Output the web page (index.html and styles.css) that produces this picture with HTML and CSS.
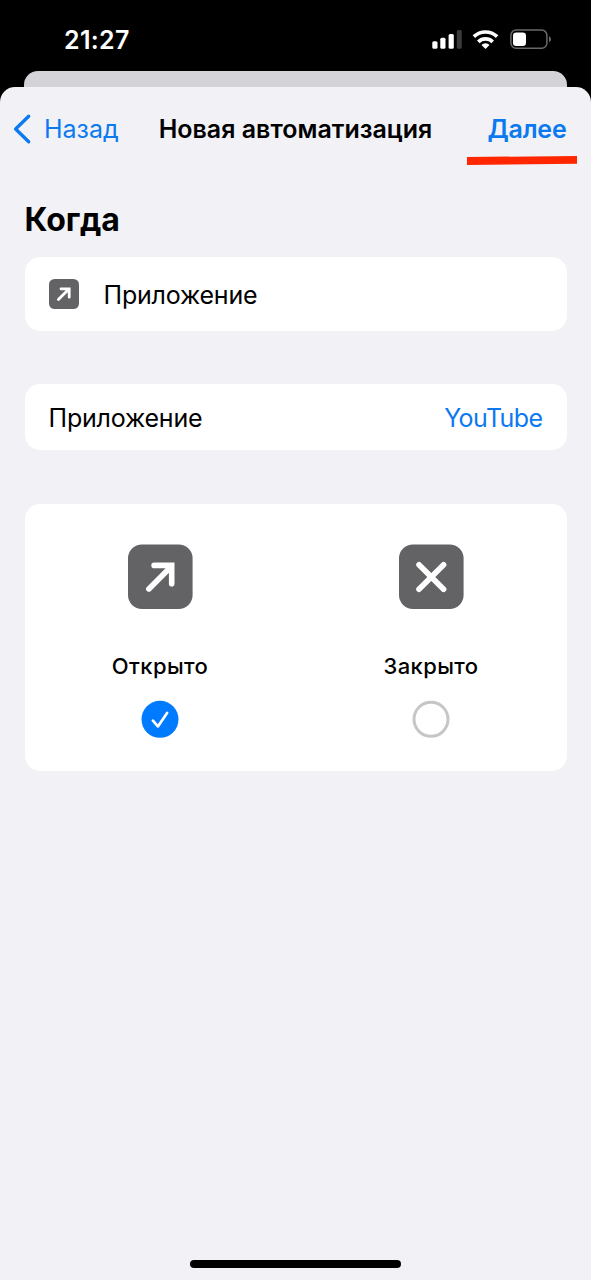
FILE: index.html
```html
<!DOCTYPE html>
<html lang="ru">
<head>
<meta charset="utf-8">
<title>Новая автоматизация</title>
<link rel="stylesheet" href="styles.css">
</head>
<body>
<div class="phone">
  <header class="status">
    <span class="time">21:27</span>
    <svg class="status-icons" width="122" height="24" viewBox="0 0 122 24">
      <g fill="#fff">
        <rect x="2.3" y="13.2" width="5.2" height="7.6" rx="1.5"/>
        <rect x="10.3" y="9.8" width="5.2" height="11" rx="1.5"/>
        <rect x="18.6" y="6" width="5.2" height="14.8" rx="1.5"/>
        <rect x="26.8" y="2" width="5" height="18.8" rx="1.5" fill="#3a3a3c"/>
      </g>
      <g fill="none" stroke="#fff" stroke-width="3.7">
        <path d="M43.9 8.7a16.7 16.7 0 0 1 23.2 0"/>
        <path d="M48.3 13.8a10.4 10.4 0 0 1 14.4 0"/>
      </g>
      <path d="M51.5 16.9a5.6 5.6 0 0 1 8 0L55.5 20.9z" fill="#fff"/>
      <rect x="80.9" y="2.1" width="36" height="18.2" rx="5.2" fill="none" stroke="#69696b" stroke-width="1.5"/>
      <rect x="83" y="4.6" width="13" height="13.4" rx="3.2" fill="#fff"/>
      <path d="M119 8.2c2.6 1.1 2.6 5 0 6z" fill="#69696b"/>
    </svg>
  </header>
  <div class="back-sheet"></div>
  <main class="sheet">
    <nav class="nav">
      <a class="back">
        <svg width="20" height="32" viewBox="0 0 20 32"><path d="M16.7 3.2L3.6 16L16.7 28.8" fill="none" stroke="#0b79f0" stroke-width="3.3" stroke-linecap="round" stroke-linejoin="round"/></svg>
        <span class="back-label">Назад</span>
      </a>
      <h1 class="title">Новая автоматизация</h1>
      <a class="next">Далее
        <svg class="marker" width="112" height="12" viewBox="0 0 112 12"><path d="M1 2L111 1V8.8L1 9.9z" fill="#ff2600"/></svg>
      </a>
    </nav>
    <h2 class="heading">Когда</h2>
    <section class="card trigger">
      <svg width="30" height="30" viewBox="0 0 30 30"><rect width="30" height="30" rx="5.5" fill="#636365"/><path d="M9.4 20.5L20 9.9M12 9.8H20.2V18.2" fill="none" stroke="#fff" stroke-width="2.8" stroke-linecap="round"/></svg>
      <span class="label">Приложение</span>
    </section>
    <section class="card app-row">
      <span class="label">Приложение</span>
      <span class="value">YouTube</span>
    </section>
    <section class="card choices">
      <div class="choice">
        <svg width="65" height="65" viewBox="0 0 65 65"><rect y="-.5" width="64.6" height="64.6" rx="14" fill="#636365"/><path d="M20.9 43.9L43 21.8M26.1 20.4H43.7V38.7" fill="none" stroke="#fff" stroke-width="5.6" stroke-linecap="round"/></svg>
        <span class="choice-label">Открыто</span>
        <svg width="38" height="38" viewBox="0 0 38 38"><circle cx="19" cy="19.3" r="18.5" fill="#007aff"/><path d="M11.9 20.6L16.9 26.4L26.1 12.9" fill="none" stroke="#fff" stroke-width="2.7" stroke-linecap="round" stroke-linejoin="round"/></svg>
      </div>
      <div class="choice">
        <svg width="65" height="65" viewBox="0 0 65 65"><rect y="-.5" width="64.6" height="64.6" rx="14" fill="#636365"/><path d="M20 19.7L44.6 44.3M44.6 19.7L20 44.3" fill="none" stroke="#fff" stroke-width="5.6" stroke-linecap="round"/></svg>
        <span class="choice-label">Закрыто</span>
        <svg width="38" height="38" viewBox="0 0 38 38"><circle cx="19" cy="19.3" r="17" fill="#fff" stroke="#c6c6c8" stroke-width="3"/></svg>
      </div>
    </section>
    <div class="home-bar"></div>
  </main>
</div>
</body>
</html>
```
FILE: styles.css
```css
* { box-sizing: border-box; }
svg { overflow: visible; }
body { margin: 0; background: #000; font-family: Inter, "Noto Sans", sans-serif; color: #000; }
.phone { display: flex; flex-direction: column; height: 1280px; overflow: hidden; }
.status { flex: none; display: flex; justify-content: space-between; height: 71px; padding: 28px 39px 0 64px; }
.time { color: #fff; font-size: 25px; font-weight: 600; line-height: 24px; letter-spacing: 0.3px; }
.back-sheet { flex: none; height: 32px; margin: 0 24px -16px; border-radius: 14px 14px 0 0; background: #d4d3d8; }
.sheet { flex: 1; display: flex; flex-direction: column; padding: 0 24.5px 12px; border-radius: 15px 15px 0 0; background: #f1f1f6; }
.nav { display: grid; grid-template-columns: 1fr auto 1fr; align-items: center; height: 83px; margin: 0 0 2px; }
.back, .title, .next { font-size: 25px; line-height: 32px; white-space: nowrap; color: #0b79f0; }
.back { display: flex; gap: 12px; margin-left: -12.5px; }
.title { margin: 0; font-weight: 600; color: #000; }
.next { position: relative; justify-self: end; font-weight: 600; letter-spacing: -0.2px; }
.marker { position: absolute; right: -11px; top: 42px; }
.heading { margin: 28px 0 17px; font-size: 32px; line-height: 40px; font-weight: 700; letter-spacing: -0.1px; }
.card { flex: none; display: flex; align-items: center; border-radius: 15px; background: #fff; }
.trigger { height: 74px; padding: 0 24px; gap: 25px; }
.trigger .label { padding-top: 2px; }
.app-row { height: 66px; margin-top: 53px; padding: 2px 24px 0; justify-content: space-between; }
.label, .value { font-size: 25px; line-height: 32px; letter-spacing: -0.2px; }
.value { color: #0b79f0; letter-spacing: -0.6px; }
.choices { height: 267px; margin-top: 54px; padding-top: 8px; }
.choice { flex: 1; display: flex; flex-direction: column; align-items: center; }
.choice-label { margin: 42px 0 20px; font-size: 22px; line-height: 28px; font-weight: 500; letter-spacing: 0.4px; }
.home-bar { align-self: center; width: 211px; height: 8px; margin-top: auto; border-radius: 4px; background: #000; }
```
